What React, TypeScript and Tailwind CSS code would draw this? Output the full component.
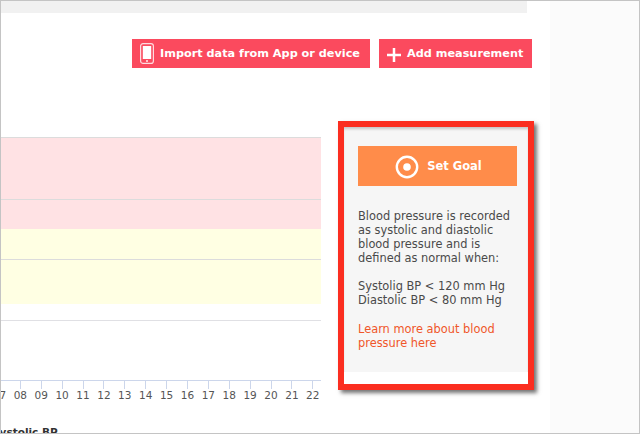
export default function App() {
  const days = ["07","08","09","10","11","12","13","14","15","16","17","18","19","20","21","22"];
  return (
    <div className="w-[640px] h-[434px] overflow-hidden flex flex-col bg-[#fbfbfb] border-t border-b border-l border-r border-[#c4c4c4] font-['DejaVu_Sans','Liberation_Sans',sans-serif]">
      <div className="w-[549px] h-[432px] bg-white flex flex-col">
        <div className="w-[526px] h-[12px] shrink-0 bg-[#f1f1f1]" />
        <div className="w-[531px] flex justify-end gap-[9px] mt-[26px] h-[29px] shrink-0">
          <button className="w-[238px] h-[29px] pt-[2px] bg-[#fb4a5e] flex items-center pl-[8px] gap-[6px] text-white text-[11.25px] font-bold whitespace-nowrap">
            <svg width="14" height="21" viewBox="0 0 14 21" fill="none" className="shrink-0 -mt-[2px]">
              <rect x="0.6" y="0.6" width="12.8" height="19.8" rx="2.5" stroke="#fff" strokeOpacity="0.8" strokeWidth="1.2" />
              <rect x="2.8" y="3" width="8.4" height="13" fill="#fff" />
              <circle cx="7" cy="18" r="0.9" fill="#fff" />
            </svg>
            Import data from App or device
          </button>
          <button className="w-[153px] h-[29px] pt-[2px] bg-[#fb4a5e] flex items-center pl-[8px] gap-[6px] text-white text-[11.25px] font-bold whitespace-nowrap">
            <svg width="14" height="14" viewBox="0 0 14 14" className="shrink-0">
              <path d="M7 0v14M0 7h14" stroke="#fff" strokeWidth="2.5" />
            </svg>
            Add measurement
          </button>
        </div>
        <div className="flex flex-1 min-h-0">
          <div className="w-[320px] shrink-0 flex flex-col pt-[69px]">
            <div className="h-px shrink-0 bg-[#dcdcdc]" />
            <div className="h-[61px] shrink-0 bg-[#ffe2e4]" />
            <div className="h-px shrink-0 bg-[#dcdcdc]" />
            <div className="h-[29px] shrink-0 bg-[#ffe2e4]" />
            <div className="h-[30px] shrink-0 bg-[#ffffe3]" />
            <div className="h-px shrink-0 bg-[#dcdcdc]" />
            <div className="h-[44px] shrink-0 bg-[#ffffe3]" />
            <div className="h-[16px] shrink-0" />
            <div className="h-px shrink-0 bg-[#e0e0e4]" />
            <div className="h-[59px] shrink-0" />
            <div className="h-px shrink-0 bg-[#ccd6eb]" />
            <div className="flex w-[335px] -ml-[12px] h-[8px] shrink-0">
              {days.map((d) => (
                <div key={d} className="w-[20.9px] flex justify-center"><div className="w-px h-[8px] bg-[#ccd6eb]" /></div>
              ))}
            </div>
            <div className="flex w-[335px] -ml-[12px] text-[10.5px] leading-[12px] text-[#555] shrink-0">
              {days.map((d) => (
                <div key={d} className="w-[20.9px] text-center">{d}</div>
              ))}
            </div>
            <div className="mt-[24px] -ml-[9px] text-[10.5px] leading-[14px] font-bold text-[#333] whitespace-nowrap shrink-0">Systolic BP</div>
          </div>
          <div className="ml-[17px] mt-[53px] w-[196px] h-[269px] shrink-0 border-[6px] border-[#fb2e20] shadow-[3px_3px_4px_rgba(0,0,0,0.55)] bg-white">
            <div className="h-[245px] bg-[#f6f6f6] shadow-[inset_0_3px_3px_-1px_rgba(0,0,0,0.2)] pl-[14px] pt-[19px]">
              <button className="w-[159px] h-[40px] pt-[2px] pl-[2px] bg-[#ff8c4a] flex items-center justify-center gap-[8px] text-white text-[11.5px] font-bold">
                <svg width="24" height="24" viewBox="0 0 24 24" fill="none" className="shrink-0">
                  <circle cx="12" cy="12" r="10.2" stroke="#fff" strokeWidth="2.4" />
                  <circle cx="12" cy="12" r="3.8" fill="#fff" />
                </svg>
                Set Goal
              </button>
              <p className="mt-[23px] w-[165px] text-[11.4px] leading-[14px] text-[#4a4a4a]">
                Blood pressure is recorded as systolic and diastolic blood pressure and is defined as normal when:
              </p>
              <p className="mt-[14px] text-[11.4px] leading-[14px] text-[#4a4a4a] whitespace-nowrap">
                Systolig BP &lt; 120 mm Hg<br />Diastolic BP &lt; 80 mm Hg
              </p>
              <p className="mt-[15px] w-[165px] text-[11.4px] leading-[14px] text-[#f0562a]">
                Learn more about blood pressure here
              </p>
            </div>
          </div>
        </div>
      </div>
    </div>
  );
}
